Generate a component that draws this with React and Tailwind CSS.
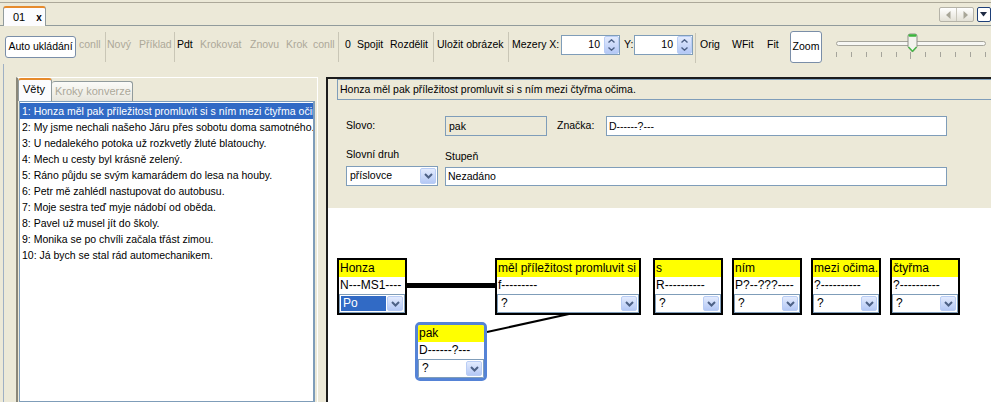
import React from 'react';

const Chevron = () => (
  <svg width="9" height="6" viewBox="0 0 9 6">
    <path d="M1 1 L4.5 4.5 L8 1" fill="none" stroke="#4d6185" strokeWidth="2" />
  </svg>
);

const ArrowBtn = ({ className = '' }) => (
  <div className={`flex items-center justify-center rounded-[2px] border border-[#b9cdf5] bg-linear-to-b from-[#e3ebfd] to-[#b4c8f5] ${className}`}>
    <Chevron />
  </div>
);

const Spinner = () => (
  <div className="flex flex-col w-[15px] h-[18px] rounded-[2px] border border-[#b9cdf5] bg-linear-to-b from-[#e3ebfd] to-[#b4c8f5]">
    <div className="flex-1 flex items-center justify-center">
      <svg width="7" height="4" viewBox="0 0 7 4"><path d="M0.5 3.5 L3.5 0.8 L6.5 3.5" fill="none" stroke="#4d6185" strokeWidth="1.4" /></svg>
    </div>
    <div className="flex-1 flex items-center justify-center">
      <svg width="7" height="4" viewBox="0 0 7 4"><path d="M0.5 0.5 L3.5 3.2 L6.5 0.5" fill="none" stroke="#4d6185" strokeWidth="1.4" /></svg>
    </div>
  </div>
);

const NumInput = () => (
  <div className="self-start mt-[9px] w-[59px] h-[20px] border border-[#7f9db9] bg-white flex items-center">
    <span className="flex-1 text-right pr-[4px]">10</span>
    <Spinner />
  </div>
);

const Sep = () => <div className="self-start mt-[6px] w-px h-[30px] bg-[#c9c6b6]" />;

const sentences = [
  '1: Honza měl pak příležitost promluvit si s ním mezi čtyřma očima.',
  '2: My jsme nechali našeho Járu přes sobotu doma samotného.',
  '3: U nedalekého potoka už rozkvetly žluté blatouchy.',
  '4: Mech u cesty byl krásně zelený.',
  '5: Ráno půjdu se svým kamarádem do lesa na houby.',
  '6: Petr mě zahlédl nastupovat do autobusu.',
  '7: Moje sestra teď myje nádobí od oběda.',
  '8: Pavel už musel jít do školy.',
  '9: Monika se po chvíli začala třást zimou.',
  '10: Já bych se stal rád automechanikem.',
];

const Node = ({ className, title, tag, selected, rounded }) => (
  <div
    className={`absolute bg-white flex flex-col text-[12px] ${
      rounded ? 'border-[3px] border-[#5583d6] rounded-[5px] overflow-hidden' : 'border-2 border-black'
    } ${className}`}
  >
    <div className="h-[17px] leading-[17px] bg-[#ffff00] pl-px whitespace-nowrap overflow-hidden">{title}</div>
    <div className="h-[17px] leading-[17px] pl-px whitespace-nowrap overflow-hidden">{tag}</div>
    <div className="h-[19px] border border-[#7f9db9] flex items-center">
      {selected ? (
        <div className="flex-1 h-[15px] mx-px bg-[#316ac5] text-white pl-[2px] leading-[15px]">Po</div>
      ) : (
        <div className="flex-1 pl-[3px] leading-[15px]">?</div>
      )}
      <ArrowBtn className="w-[16px] h-[15px] mr-px" />
    </div>
  </div>
);

export default function App() {
  return (
    <div className="w-[991px] h-[402px] overflow-hidden bg-[#ece9d8] font-['Liberation_Sans',Arial,sans-serif] text-[10.5px] text-black flex flex-col">
      {/* tab strip */}
      <div className="mt-[2px] h-[24px] shrink-0 border-t border-b border-[#aca899] border-b-[#919b9c] flex">
        <div className="self-end -mb-px ml-[3px] w-[43px] h-[20px] bg-[#fcfcfe] border-l border-r border-[#919b9c] border-t-2 border-t-[#e68b2c] rounded-t-[3px] flex items-center pl-[9px] text-[11px]">
          <span>01</span>
          <span className="ml-[11px] font-bold text-[10px]">x</span>
        </div>
        <div className="ml-auto mt-[4px] flex items-start">
          <div className="w-[35px] h-[15px] border border-[#b5b3a8] rounded-[2px] bg-linear-to-b from-[#ffffff] to-[#e3e1d6] flex">
            <div className="flex-1 flex items-center justify-center border-r border-[#c8c6bb]">
              <svg width="5" height="8" viewBox="0 0 5 8"><path d="M4.5 0 L0 4 L4.5 8 Z" fill="#a8a698" /></svg>
            </div>
            <div className="flex-1 flex items-center justify-center">
              <svg width="5" height="8" viewBox="0 0 5 8"><path d="M0.5 0 L5 4 L0.5 8 Z" fill="#a8a698" /></svg>
            </div>
          </div>
          <div className="ml-[3px] w-[14px] h-[15px] border border-[#1e3f78] rounded-[2px] bg-white flex items-center pl-[2px]">
            <svg width="7" height="5" viewBox="0 0 7 5"><path d="M0 0 L7 0 L3.5 4.5 Z" fill="#1e2a44" /></svg>
          </div>
        </div>
      </div>

      {/* toolbar */}
      <div className="h-[38px] shrink-0 flex items-center whitespace-nowrap">
        <div className="self-start mt-[10px] ml-[5px] w-[71px] h-[22px] bg-white border border-[#7a8ea8] rounded-[3px] flex items-center justify-center">Auto ukládání</div>
        <span className="ml-[3px] w-[26px] text-[#aca899]">conll</span>
        <Sep />
        <span className="ml-px w-[32px] text-[#aca899]">Nový</span>
        <span className="w-[35px] text-[#aca899]">Příklad</span>
        <Sep />
        <span className="ml-[2px] w-[23px]">Pdt</span>
        <span className="w-[50px] text-[#aca899]">Krokovat</span>
        <span className="w-[36px] text-[#aca899]">Znovu</span>
        <span className="w-[27px] text-[#aca899]">Krok</span>
        <span className="w-[25px] text-[#aca899]">conll</span>
        <Sep />
        <span className="ml-[6px] w-[12px]">0</span>
        <span className="w-[33px]">Spojit</span>
        <span className="w-[43px]">Rozdělit</span>
        <Sep />
        <span className="ml-[3px] w-[71px]">Uložit obrázek</span>
        <Sep />
        <span className="ml-[3px] w-[49px]">Mezery X:</span>
        <NumInput />
        <span className="ml-[4px] w-[10px]">Y:</span>
        <NumInput />
        <div className="ml-[2px]"><Sep /></div>
        <span className="ml-[4px] w-[32px]">Orig</span>
        <span className="w-[35px]">WFit</span>
        <span className="w-[23px]">Fit</span>
        <div className="self-start mt-[5px] w-[32px] h-[32px] bg-white border border-[#7a8ea8] rounded-[3px] flex items-center justify-center">Zoom</div>
        <div className="relative ml-[14px] w-[150px] h-[30px] flex flex-col">
          <div className="mt-[11px] h-[5px] rounded-full border border-[#a5a49b] bg-[#f7f7f4]" />
          <div className="mt-[6px] flex justify-between items-start">
            {[0, 1, 2, 3, 4, 5, 6, 7, 8, 9, 10].map((i) => (
              <div key={i} className={`w-px bg-[#a5a49b] ${i === 5 ? 'h-[7px]' : 'h-[5px]'}`} />
            ))}
          </div>
          <svg className="absolute left-[71px] top-[3px]" width="11" height="20" viewBox="0 0 11 20">
            <path d="M1 3 Q1 1 3 1 H8 Q10 1 10 3 V14 L5.5 19 L1 14 Z" fill="#f4f3ee" stroke="#8e8f88" />
            <rect x="1.5" y="1.3" width="8" height="2.5" rx="1" fill="#3cb53c" />
            <path d="M1.5 14 L5.5 18.3 L9.5 14" fill="none" stroke="#45b845" strokeWidth="1.3" />
          </svg>
        </div>
      </div>

      {/* content */}
      <div className="flex-1 flex ml-[3px] border-l border-[#9fb0c4] pt-[13px] min-h-0">
        {/* left panel */}
        <div className="ml-[12px] w-[302px] flex flex-col border-l-2 border-l-[#8a877a] border-t border-t-white border-r border-r-white">
          <div className="h-[23px] shrink-0 flex items-end">
            <div className="w-[34px] h-[23px] bg-[#fcfcfe] border-l border-r border-[#919b9c] border-t-2 border-t-[#e68b2c] rounded-t-[3px] pl-[4px] leading-[19px] text-[11px]">Věty</div>
            <div className="w-[81px] h-[20px] bg-linear-to-b from-[#fbfbf8] to-[#e8e6dc] border-r border-t border-[#919b9c] rounded-t-[3px] pl-[3px] leading-[18px] text-[#aca899] text-[11px]">Kroky konverze</div>
          </div>
          <div className="ml-px w-[296px] flex-1 border border-[#7f9db9] border-r-2 bg-white pt-px overflow-hidden">
            {sentences.map((s, i) => (
              <div
                key={i}
                className={`h-[16px] leading-[16px] pl-[2px] whitespace-nowrap overflow-hidden ${i === 0 ? 'bg-[#316ac5] text-white' : ''}`}
              >
                {s}
              </div>
            ))}
          </div>
        </div>

        {/* right panel */}
        <div className="ml-[8px] flex-1 flex flex-col border-l-2 border-t-2 border-[#1c1c1c] min-w-0">
          <div className="ml-[9px] w-[700px] h-[21px] shrink-0 border border-[#7f9db9] pl-[2px] leading-[19px] whitespace-nowrap">
            Honza měl pak příležitost promluvit si s ním mezi čtyřma očima.
          </div>

          <div className="pl-[18px] pt-[16px] shrink-0">
            <div className="flex items-center h-[20px]">
              <span className="w-[99px]">Slovo:</span>
              <div className="w-[102px] h-[20px] border border-[#7f9db9] bg-[#ece9d8] pl-[3px] leading-[18px]">pak</div>
              <span className="ml-[10px] w-[49px]">Značka:</span>
              <div className="w-[341px] h-[20px] border border-[#7f9db9] bg-white pl-[2px] leading-[18px]">D------?---</div>
            </div>
            <div className="flex">
              <div className="w-[99px] flex flex-col">
                <span className="mt-[11px] h-[14px] leading-[14px]">Slovní druh</span>
                <div className="mt-[5px] w-[92px] h-[20px] border border-[#7f9db9] bg-white flex items-center">
                  <span className="flex-1 pl-[3px]">příslovce</span>
                  <ArrowBtn className="w-[16px] h-[16px] mr-px" />
                </div>
              </div>
              <div className="flex flex-col">
                <span className="mt-[13px] h-[14px] leading-[14px]">Stupeň</span>
                <div className="mt-[4px] w-[502px] h-[19px] border border-[#7f9db9] bg-white pl-[2px] leading-[17px]">Nezadáno</div>
              </div>
            </div>
          </div>

          <div className="mt-[22px] flex-1 bg-white relative overflow-hidden">
            <svg className="absolute inset-0 pointer-events-none" width="663" height="195">
              <line x1="78" y1="77.5" x2="169" y2="77.5" stroke="#000" strokeWidth="5" />
              <line x1="241" y1="106" x2="159" y2="124" stroke="#000" strokeWidth="2" />
            </svg>
            <Node className="left-[9px] top-[50px] w-[70px]" title="Honza" tag="N---MS1----" selected />
            <Node className="left-[167px] top-[50px] w-[146px]" title="měl příležitost promluvit si" tag="f---------" />
            <Node className="left-[325px] top-[50px] w-[70px]" title="s" tag="R----------" />
            <Node className="left-[404px] top-[50px] w-[70px]" title="ním" tag="P?--???----" />
            <Node className="left-[483px] top-[50px] w-[70px]" title="mezi očima." tag="?----------" />
            <Node className="left-[562px] top-[50px] w-[70px]" title="čtyřma" tag="?----------" />
            <Node className="left-[87px] top-[114px] w-[72px]" title="pak" tag="D------?---" rounded />
          </div>
        </div>
      </div>
    </div>
  );
}
